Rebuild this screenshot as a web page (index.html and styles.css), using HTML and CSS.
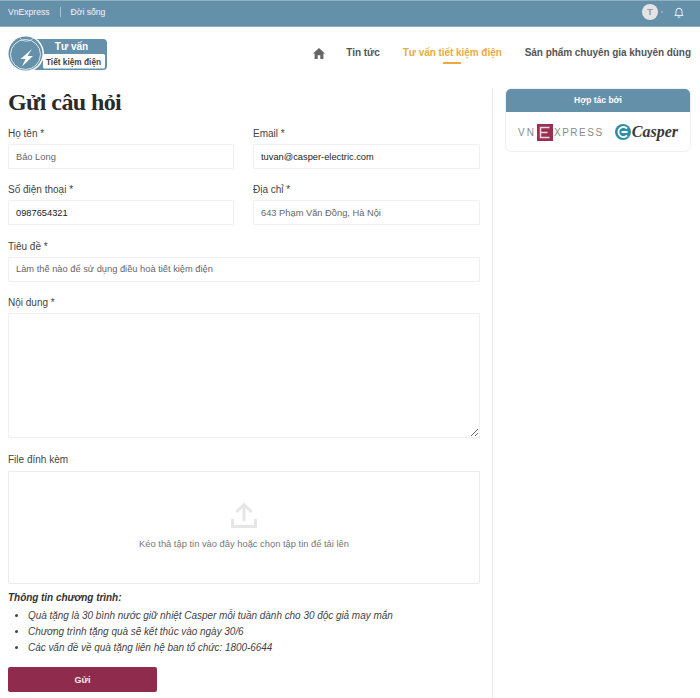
FILE: index.html
```html
<!DOCTYPE html>
<html lang="vi">
<head>
<meta charset="utf-8">
<title>Gửi câu hỏi</title>
<link rel="stylesheet" href="styles.css">
</head>
<body>
<div class="topbar">
  <div class="topbar-links">
    <a class="topbar-link">VnExpress</a>
    <span class="topbar-sep"></span>
    <a class="topbar-link">Đời sống</a>
  </div>
  <div class="topbar-user">
    <span class="avatar">T</span>
    <span class="caret-dot"></span>
    <svg class="bell" width="10" height="11" viewBox="0 0 12 13" fill="none" stroke="#fff" stroke-width="1.1"><path d="M1 10c1-.8 1.400-1.600 1.400-3.600V5a3.600 3.600 0 0 1 7.200 0v1.400c0 2 .4 2.800 1.400 3.600z"/><path d="M4.500 12h3"/></svg>
  </div>
</div>
<header class="header">
  <svg class="logo" width="100" height="40" viewBox="0 0 100 40">
    <rect x="24" y="5" width="75" height="31" rx="4" fill="#6590aa"/>
    <rect x="35" y="20" width="62" height="14.500" rx="1.500" fill="#fff"/>
    <circle cx="17.500" cy="19.500" r="18.500" fill="#fff"/>
    <circle cx="17.500" cy="19.500" r="17" fill="#6590aa"/>
    <circle cx="17.500" cy="20.500" r="15" fill="#6590aa" stroke="#dfe8ee" stroke-width="1"/>
    <path d="M12 4c4 5 11 4 15-2" fill="none" stroke="#dfe8ee" stroke-width=".8"/>
    <path d="M24 15l-11.500 10h5L14 32.500 25 22h-5.500z" fill="#fff"/>
    <text x="63.500" y="15.500" class="logo-top">Tư vấn</text>
    <text x="65.500" y="30.500" class="logo-bottom">Tiết kiệm điện</text>
  </svg>
  <nav class="nav">
    <svg class="home" width="12" height="11" viewBox="0 0 12 11"><path d="M6 0l6 5.500h-1.600V11H7.300V7.300H4.700V11H1.600V5.500H0z" fill="#666"/></svg>
    <a class="nav-link">Tin tức</a>
    <a class="nav-link active">Tư vấn tiết kiệm điện</a>
    <a class="nav-link">Sản phẩm chuyên gia khuyên dùng</a>
  </nav>
</header>
<main class="layout">
  <form class="content">
    <h1 class="title">Gửi câu hỏi</h1>
    <div class="grid">
      <label class="field"><span class="label">Họ tên *</span><input class="input muted" value="Bảo Long"></label>
      <label class="field"><span class="label">Email *</span><input class="input" value="tuvan@casper-electric.com"></label>
      <label class="field"><span class="label">Số điện thoại *</span><input class="input" value="0987654321"></label>
      <label class="field"><span class="label">Địa chỉ *</span><input class="input muted" value="643 Phạm Văn Đồng, Hà Nội"></label>
      <label class="field wide"><span class="label">Tiêu đề *</span><input class="input muted" value="Làm thế nào để sử dụng điều hoà tiết kiệm điện"></label>
      <label class="field wide"><span class="label">Nội dung *</span><textarea class="textarea"></textarea></label>
    </div>
    <div class="upload">
      <span class="label">File đính kèm</span>
      <div class="dropzone">
        <svg width="26" height="26" viewBox="0 0 26 26" fill="none" stroke="#e6e6e6" stroke-width="3"><path d="M13 19V3M5.500 10L13 2.500 20.500 10"/><path d="M1.500 17v7.500h23V17"/></svg>
        <p class="drop-text">Kéo thả tập tin vào đây hoặc chọn tập tin để tải lên</p>
      </div>
    </div>
    <div class="info">
      <strong class="info-title">Thông tin chương trình:</strong>
      <ul class="info-list">
        <li>Quà tặng là 30 bình nước giữ nhiệt Casper mỗi tuần dành cho 30 độc giả may mắn</li>
        <li>Chương trình tặng quà sẽ kết thúc vào ngày 30/6</li>
        <li>Các vấn đề về quà tặng liên hệ ban tổ chức: 1800-6644</li>
      </ul>
    </div>
    <button class="submit" type="button">Gửi</button>
  </form>
  <aside class="sidebar">
    <section class="partner">
      <h2 class="partner-title">Hợp tác bởi</h2>
      <div class="partner-logos">
        <div class="vne">
          <span class="vne-vn">VN</span>
          <svg class="vne-box" width="16" height="17" viewBox="0 0 16 17"><rect width="16" height="17" fill="#9a2f52"/><path d="M12.500 3.500h-9v10h9M3.500 8.500h7" fill="none" stroke="#ecd9df" stroke-width="1.500"/></svg>
          <span class="vne-xp">XPRESS</span>
        </div>
        <div class="casper">
          <svg width="16" height="16" viewBox="0 0 16 16"><circle cx="8" cy="8" r="8" fill="#2f8fa8"/><path d="M12 4.500A5 5 0 1 0 12 11.500" fill="none" stroke="#fff" stroke-width="1.800"/><path d="M6.500 8h6" stroke="#fff" stroke-width="1.800"/></svg>
          <span>Casper</span>
        </div>
      </div>
    </section>
  </aside>
</main>
</body>
</html>
```
FILE: styles.css
```css
* { box-sizing: border-box; }
html, body { margin: 0; padding: 0; }
body {
  width: 700px;
  height: 698px;
  overflow: hidden;
  background: #fff;
  font-family: "Liberation Sans", Arial, sans-serif;
  color: #333;
  font-size: 10px;
}
.topbar {
  height: 27px;
  background: #6590aa;
  border-top: 1px solid #8fb0c4;
  border-bottom: 1px solid #8fb0c4;
  padding: 0 16px 3px 8px;
  display: flex;
  align-items: center;
  justify-content: space-between;
  color: #fff;
}
.topbar-links { display: flex; align-items: center; }
.topbar-link { font-size: 8.600px; color: #f2f6f8; }
.topbar-sep { width: 1px; height: 10px; background: #a8c2d1; margin: 0 10px; }
.topbar-user { display: flex; align-items: center; }
.avatar {
  width: 16px; height: 16px; border-radius: 50%;
  background: #e4e4e4; color: #9a9a9a;
  font-size: 9px; font-weight: 700;
  display: flex; align-items: center; justify-content: center;
}
.caret-dot { width: 2px; height: 2px; margin: 0 11px 0 3px; background: #9db6c6; border-radius: 50%; }
.bell { display: block; }
.header {
  height: 58px;
  display: flex;
  align-items: flex-start;
  justify-content: space-between;
  padding: 7px 9px 0 8px;
}
.logo { display: block; }
.logo-top { font: 700 10px "Liberation Sans", sans-serif; fill: #fff; text-anchor: middle; }
.logo-bottom { font: 700 8.300px "Liberation Sans", sans-serif; fill: #444; text-anchor: middle; }
.nav { display: flex; align-items: center; padding-top: 13px; }
.home { margin-right: 21px; }
.nav-link { position: relative; font-size: 10px; font-weight: 700; color: #555; margin-right: 23px; line-height: 12px; letter-spacing: -0.05px; }
.nav-link:last-child { margin-right: 0; }
.nav-link.active { color: #eeaa3f; }
.nav-link.active::after {
  content: "";
  position: absolute;
  left: 40px;
  bottom: -5px;
  width: 18px;
  height: 2px;
  background: #eeaa3f;
}
.layout { display: flex; align-items: stretch; height: 613px; padding-top: 3px; }
.content { width: 493px; padding: 0 12px 0 8px; border-right: 1px solid #e8e8e8; flex: none; }
.title {
  margin: 0 0 12px;
  font: 700 24px/28px "Liberation Serif", serif;
  letter-spacing: -0.6px;
  color: #2a2a2a;
}
.grid { display: grid; grid-template-columns: 226px 227px; column-gap: 19px; row-gap: 15.400px; }
.field { display: block; }
.wide { grid-column: 1 / -1; }
.label { display: block; font-size: 10px; line-height: 12px; margin-bottom: 4px; color: #444; }
.input {
  display: block;
  width: 100%;
  height: 25px;
  border: 1px solid #f0f0f0;
  border-radius: 1px;
  padding: 0 7px;
  font: 9.300px "Liberation Sans", sans-serif;
  color: #222;
  background: #fff;
}
.input.muted { color: #666; }
.textarea {
  display: block;
  width: 100%;
  height: 125px;
  border: 1px solid #f0f0f0;
  border-radius: 1px;
  background: #fff;
}
.upload { margin-top: 16px; }
.upload .label { margin-bottom: 5px; }
.dropzone {
  height: 113px;
  border: 1px solid #ececec;
  border-radius: 1px;
  display: flex;
  flex-direction: column;
  align-items: center;
  padding-top: 30px;
}
.drop-text { margin: 11px 0 0; font-size: 9.350px; line-height: 11px; color: #777; }
.info { margin-top: 6px; font-style: italic; font-size: 10px; letter-spacing: -0.04px; line-height: 16px; color: #444; }
.info-title { display: block; color: #333; margin-bottom: 2px; }
.info-list { margin: 0; padding: 0 0 0 20px; }
.submit {
  display: block;
  margin-top: 11px;
  width: 149px;
  height: 25px;
  border: 0;
  border-radius: 2px;
  background: #8f2c4e;
  color: #f5e9ed;
  font: 700 9px "Liberation Sans", sans-serif;
}
.sidebar { padding: 0 9px 0 12px; flex: 1; }
.partner { border: 1px solid #f0f0f0; border-radius: 6px; overflow: hidden; height: 64px; }
.partner-title {
  margin: 0;
  height: 23px;
  background: #6590aa;
  color: #fff;
  font-size: 8.500px;
  font-weight: 700;
  line-height: 22px;
  text-align: center;
}
.partner-logos { display: flex; align-items: center; justify-content: space-between; padding: 11px 12px 0 12px; }
.vne { display: flex; align-items: center; font-size: 10px; color: #8a8a8a; }
.vne-vn { width: 19px; letter-spacing: 2px; }
.vne-xp { margin-left: 1px; letter-spacing: 1.500px; }
.casper { display: flex; align-items: center; gap: 1px; }
.casper span { font: italic 700 16px "Liberation Serif", serif; color: #3a3a3a; }
```
